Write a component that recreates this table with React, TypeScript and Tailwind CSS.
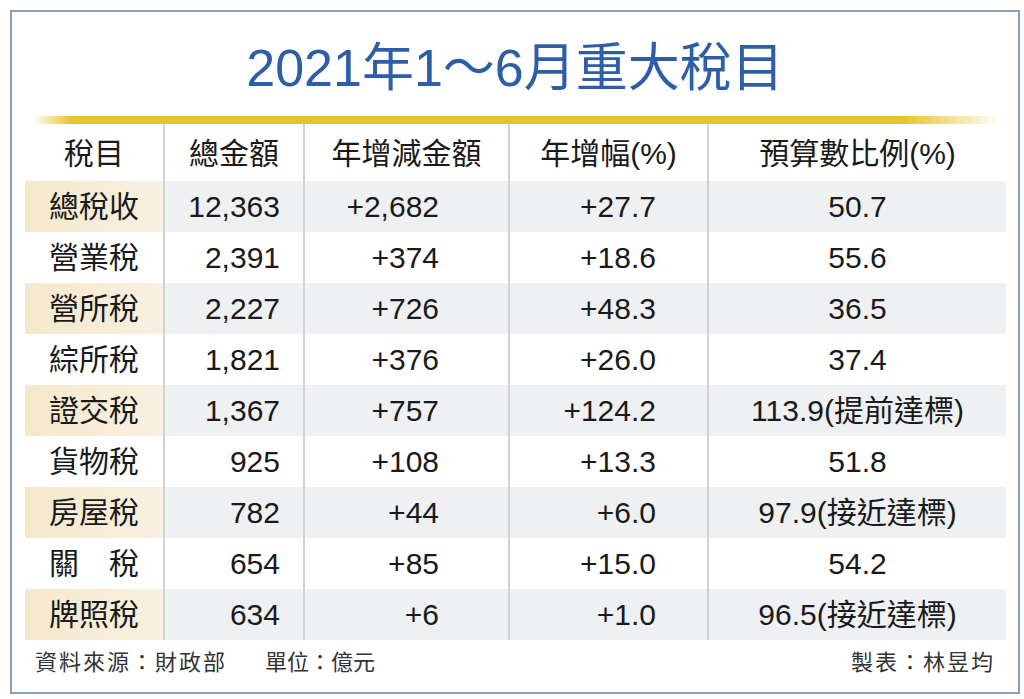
import React from "react";

const rows: [string, string, string, string, string][] = [
  ["總稅收", "12,363", "+2,682", "+27.7", "50.7"],
  ["營業稅", "2,391", "+374", "+18.6", "55.6"],
  ["營所稅", "2,227", "+726", "+48.3", "36.5"],
  ["綜所稅", "1,821", "+376", "+26.0", "37.4"],
  ["證交稅", "1,367", "+757", "+124.2", "113.9(提前達標)"],
  ["貨物稅", "925", "+108", "+13.3", "51.8"],
  ["房屋稅", "782", "+44", "+6.0", "97.9(接近達標)"],
  ["關　稅", "654", "+85", "+15.0", "54.2"],
  ["牌照稅", "634", "+6", "+1.0", "96.5(接近達標)"],
];

const headers = ["稅目", "總金額", "年增減金額", "年增幅(%)", "預算數比例(%)"];

const font = {
  fontFamily: '"Liberation Sans", "Noto Sans CJK TC", sans-serif',
};

export default function App() {
  return (
    <div
      className="w-[1024px] h-[699px] bg-white pt-[10px] pl-[10px]"
      style={font}
    >
      <div className="w-[1010px] h-[684px] border-2 border-[#8e9fb8] flex flex-col">
        <div className="mt-[30px] h-[52px] text-[52px] leading-[52px] text-[#2f5ea8] text-center">
          2021年1～6月重大稅目
        </div>
        <div className="mt-[22px] ml-[21px] mr-[18px] h-[8px] rounded-full bg-[linear-gradient(to_right,rgba(228,196,42,0)_0%,#e4c42a_4%,#e6c52c_90%,rgba(228,196,42,0)_100%)]" />
        <div className="ml-[13px] grid grid-cols-[138px_140px_205px_199px_299px] text-[30px] text-[#1a1a1a]">
          {headers.map((h, i) => (
            <div
              key={h}
              className={`h-[57px] flex items-center justify-center pt-[2px] ${
                i > 0 ? "border-l-2 border-[#d2d2d2]" : ""
              }`}
            >
              {h}
            </div>
          ))}
          {rows.map((r, ri) => {
            const shaded = ri % 2 === 0;
            const gray = shaded ? "bg-[#eef0f2]" : "bg-white";
            return (
              <React.Fragment key={ri}>
                <div
                  className={`h-[51px] flex items-center justify-center ${
                    shaded
                      ? "bg-[linear-gradient(to_right,#f5e8cb,#f8f0e1)]"
                      : "bg-white"
                  }`}
                >
                  {r[0]}
                </div>
                <div
                  className={`h-[51px] flex items-center justify-end pr-[23px] border-l-2 border-[#d2d2d2] ${gray}`}
                >
                  {r[1]}
                </div>
                <div
                  className={`h-[51px] flex items-center justify-end pr-[69px] border-l-2 border-[#d2d2d2] ${gray}`}
                >
                  {r[2]}
                </div>
                <div
                  className={`h-[51px] flex items-center justify-end pr-[51px] border-l-2 border-[#d2d2d2] ${gray}`}
                >
                  {r[3]}
                </div>
                <div
                  className={`h-[51px] flex items-center justify-center border-l-2 border-[#d2d2d2] ${gray}`}
                >
                  {r[4]}
                </div>
              </React.Fragment>
            );
          })}
        </div>
        <div className="mt-[10px] px-[23px] flex justify-between text-[22px] text-[#333333] leading-[26px]">
          <div className="flex gap-[38px]">
            <span className="tracking-[2px]">資料來源：財政部</span>
            <span>單位：億元</span>
          </div>
          <span className="tracking-[2px]">製表：林昱均</span>
        </div>
      </div>
    </div>
  );
}
